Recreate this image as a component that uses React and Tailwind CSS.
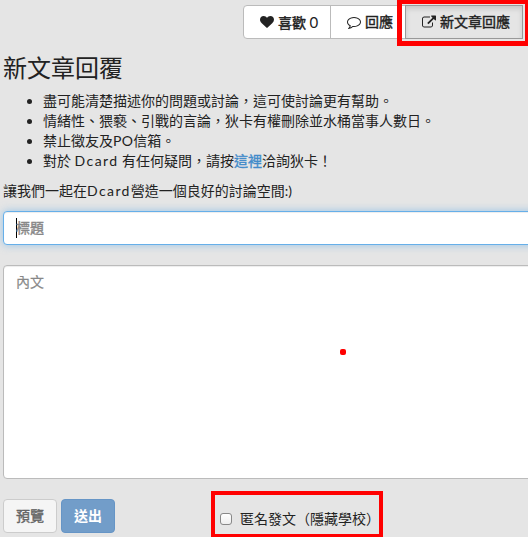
import React from 'react';

const HeartIcon = () => (
  <svg viewBox="0 0 1792 1792" className="h-[14px] w-[14px] shrink-0 fill-current">
    <path d="M896 1664q-26 0-44-18l-624-602q-10-8-27.5-26t-55.5-65.5-68-97.5-53.5-121-23.5-138q0-220 127-344t351-124q62 0 126.500 21.500t120 58 95.500 68.500 76 68q36-36 76-68t95.500-68.500 120-58 126.500-21.500q224 0 351 124t127 344q0 221-229 450l-623 600q-18 18-44 18z" />
  </svg>
);

const CommentIcon = () => (
  <svg viewBox="0 0 1792 1792" className="h-[14px] w-[14px] shrink-0 fill-current">
    <path d="M896 384q-204 0-381.500 69.500t-282 187.500-104.500 255q0 112 71.500 213.500t201.500 175.500l87 50-27 96q-24 91-70 172 152-63 275-171l43-38 57 6q69 8 130 8 204 0 381.500-69.500t282-187.500 104.500-255-104.500-255-282-187.500-381.500-69.500zm896 512q0 174-120 321.500t-326 233-450 85.500q-70 0-145-8-198 175-460 242-49 14-114 22h-5q-15 0-27-10.500t-16-27.500v-1q-3-4-.5-12t2-10 4.500-9.500l6-9 7-8.500 8-9q7-8 31-34.500t34.500-38 31-39.500 32.500-51 27-59 26-76q-157-89-247.500-220t-90.500-281q0-174 120-321.500t326-233 450-85.500 450 85.500 326 233 120 321.500z" />
  </svg>
);

const ExternalIcon = () => (
  <svg viewBox="64 0 1792 1792" className="h-[14px] w-[14px] shrink-0 fill-current">
    <path d="M1472 992v320q0 119-84.500 203.500t-203.500 84.500h-832q-119 0-203.500-84.500t-84.500-203.500v-832q0-119 84.500-203.500t203.500-84.500h704q14 0 23 9t9 23v64q0 14-9 23t-23 9h-704q-66 0-113 47t-47 113v832q0 66 47 113t113 47h832q66 0 113-47t47-113v-320q0-14 9-23t23-9h64q14 0 23 9t9 23zm384-864v512q0 26-19 45t-45 19-45-19l-176-176-652 652q-10 10-23 10t-23-10l-114-114q-10-10-10-23t10-23l652-652-176-176q-19-19-19-45t19-45 45-19h512q26 0 45 19t19 45z" />
  </svg>
);

const Toolbar = () => (
  <div className="flex h-[34px] justify-end pr-[5px] [-webkit-text-stroke:0.4px]">
    <button className="flex w-[88px] items-center gap-1 rounded-l border border-[#bbb] bg-white pl-4 whitespace-nowrap">
      <HeartIcon />
      <span>喜歡 <span className="text-[15px] [-webkit-text-stroke:0]">0</span></span>
    </button>
    <button className="-ml-px flex w-[76px] items-center gap-1 border border-[#bbb] bg-white pl-4 whitespace-nowrap">
      <CommentIcon />
      <span>回應</span>
    </button>
    <button className="-ml-px flex w-[118px] items-center gap-1 border border-[#999] bg-[#e5e5e5] pl-4 whitespace-nowrap shadow-[inset_0_3px_5px_rgba(0,0,0,0.125)]">
      <ExternalIcon />
      <span>新文章回應</span>
    </button>
  </div>
);

const Guidelines = () => (
  <ul className="mt-[10px] list-disc pl-10">
    <li>盡可能清楚描述你的問題或討論，這可使討論更有幫助。</li>
    <li>情緒性、猥褻、引戰的言論，狄卡有權刪除並水桶當事人數日。</li>
    <li>禁止徵友及<span className="tracking-[0.3px]">PO</span>信箱。</li>
    <li>
      對於 <span className="tracking-[1.4px]">Dcard</span> 有任何疑問，請按
      <a href="#" className="text-[#428bca] [-webkit-text-stroke:0.4px]">這裡</a>
      洽詢狄卡！
    </li>
  </ul>
);

const App = () => (
  <div className="relative h-[537px] w-[528px] overflow-hidden bg-[#e5e5e5] pt-[5px] pl-[3px] font-[Lato,'Noto_Sans_CJK_TC',sans-serif] text-sm leading-5 text-[#222]">
    <Toolbar />

    <h3 className="mt-4 text-2xl leading-[26px]">新文章回覆</h3>
    <Guidelines />
    <p className="mt-[10px]">
      讓我們一起在<span className="tracking-[1.4px]">Dcard</span>營造一個良好的討論空間:)
    </p>

    {/* The form is wider than the window, so its right edge is cut off */}
    <form className="mt-[10px] w-[560px]">
      <div className="flex h-[34px] items-center rounded border border-[#66afe9] bg-white pl-3 text-[#888] shadow-[inset_0_1px_1px_rgba(0,0,0,0.075),0_0_8px_rgba(102,175,233,0.6)]">
        <span className="h-5 w-px bg-black" />
        <span className="-ml-px [-webkit-text-stroke:0.4px]">標題</span>
      </div>
      <div className="mt-5 h-[214px] rounded border border-[#bbb] bg-white px-3 py-1.5 text-[#888] shadow-[inset_0_1px_1px_rgba(0,0,0,0.075)] [-webkit-text-stroke:0.2px]">
        內文
      </div>
      <div className="mt-5 flex h-[34px] items-center">
        <button type="button" className="h-[34px] w-[54px] rounded border border-[#ccc] bg-[#f5f5f5] text-[#666] [-webkit-text-stroke:0.4px]">預覽</button>
        <button type="button" className="ml-1 h-[34px] w-[54px] rounded border border-[#6695c6] bg-[#729dc9] font-bold text-white">送出</button>
        <label className="ml-[105px] flex items-center pt-[6px] whitespace-nowrap">
          <input type="checkbox" className="mr-2 h-3 w-3 appearance-none rounded-[3px] border border-[#888] bg-linear-to-b from-white to-[#eee]" />
          匿名發文（隱藏學校）
        </label>
      </div>
    </form>

    {/* Red markup laid over the page */}
    <div className="absolute top-0 left-[397px] h-[46px] w-[131px] border-[5px] border-t-4 border-r-[3px] border-[#f00]" />
    <div className="absolute top-[491px] left-[211px] h-[47px] w-[172px] border-4 border-[#f00]" />
    <div className="absolute top-[349px] left-[340px] h-[6px] w-[6px] rounded-[2px] bg-[#f00]" />
  </div>
);

export default App;
